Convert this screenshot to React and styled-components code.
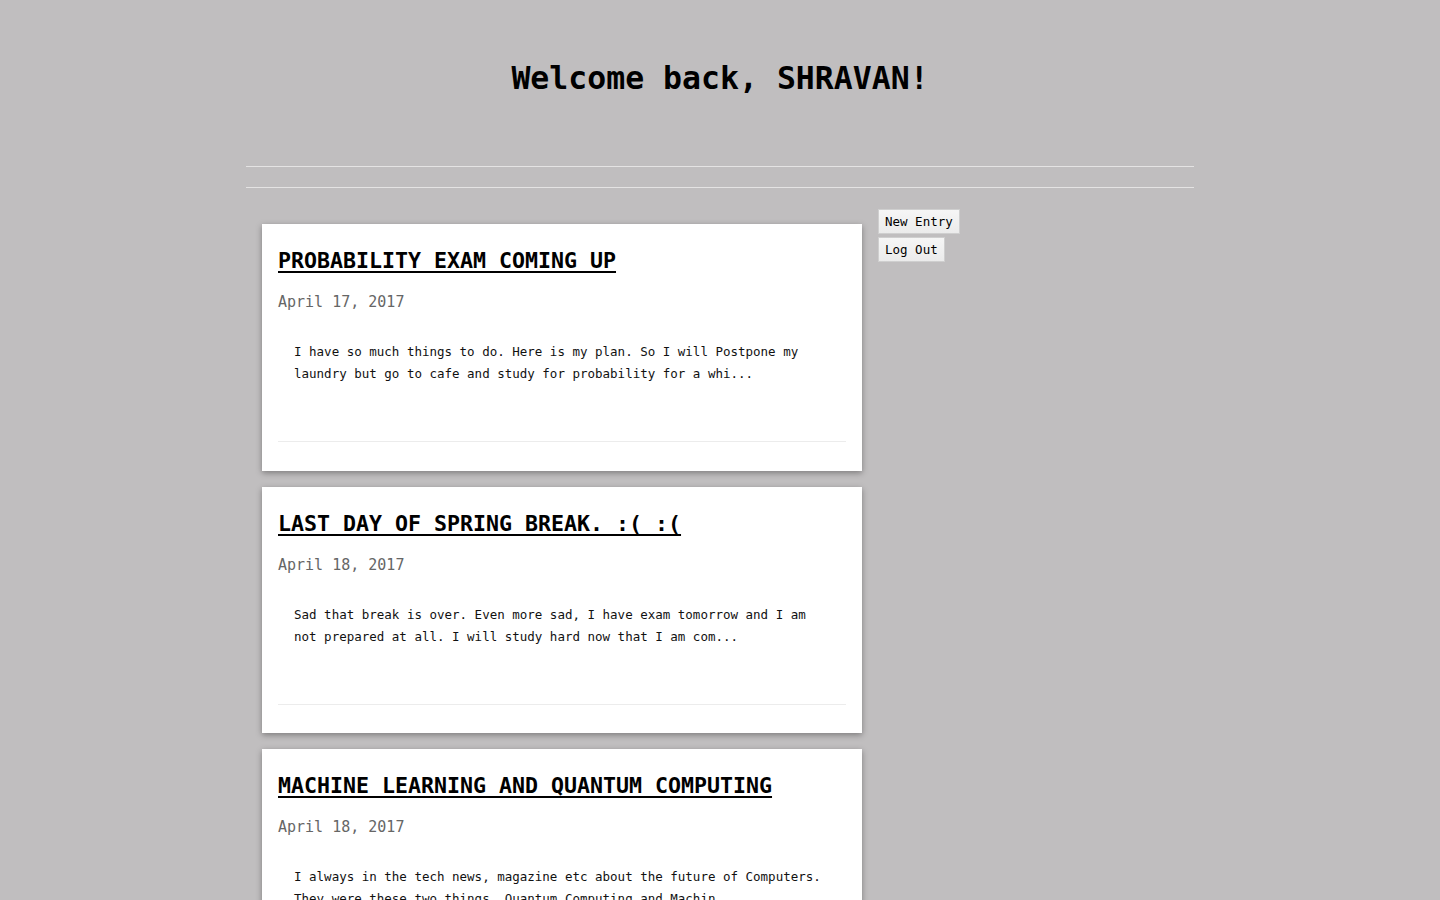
import React from 'react';
import styled, { createGlobalStyle } from 'styled-components';

const GlobalStyle = createGlobalStyle`
  html, body {
    margin: 0;
    padding: 0;
    background: #c0bebf;
  }
  body {
    font-family: 'DejaVu Sans Mono', 'Liberation Mono', monospace;
    color: #000;
  }
`;

const Page = styled.div`
  min-height: 100vh;
  background: #c0bebf;
  overflow: hidden;
`;

const Container = styled.div`
  width: 948px;
  margin: 0 auto;
`;

const Title = styled.h1`
  margin: 0;
  padding-top: 58px;
  height: 108px;
  box-sizing: border-box;
  font-size: 31.5px;
  line-height: 40px;
  font-weight: bold;
  text-align: center;
`;

const Rule = styled.hr`
  margin: 0;
  border: 0;
  border-top: 1px solid #e4e3e3;
  height: 0;
`;

const Spacer = styled.div`
  height: ${(p) => p.size}px;
`;

const Main = styled.div`
  display: flex;
  align-items: flex-start;
  gap: 16px;
  padding: 0 16px;
`;

const Entries = styled.div`
  width: 600px;
  margin-top: 36px;
  display: flex;
  flex-direction: column;
  gap: 16px;
`;

const Card = styled.article`
  background: #fff;
  padding: 16px 16px 28.5px;
  box-shadow: 0 2px 6px rgba(0, 0, 0, 0.35);
`;

const Heading = styled.a`
  display: inline-block;
  margin-top: 6px;
  font-size: 21.6px;
  line-height: 30px;
  font-weight: bold;
  color: #000;
  text-decoration: underline;
  text-decoration-thickness: 2px;
  text-underline-offset: 3px;
  cursor: pointer;
`;

const Date = styled.div`
  margin-top: 16px;
  font-size: 15px;
  line-height: 20px;
  color: #666;
`;

const Excerpt = styled.p`
  margin: 29px 0 0;
  padding: 0 16px;
  min-height: 44px;
  font-size: 12.5px;
  line-height: 22px;
  color: #111;
`;

const CardRule = styled.hr`
  margin: 56px 0 0;
  border: 0;
  border-top: 1px solid #ececec;
  height: 0;
`;

const Actions = styled.div`
  margin-top: 21px;
  display: flex;
  flex-direction: column;
  align-items: flex-start;
  gap: 3px;
`;

const Button = styled.button`
  font-family: 'DejaVu Sans Mono', 'Liberation Mono', monospace;
  font-size: 12.5px;
  line-height: 23px;
  padding: 0 6px;
  color: #000;
  background: linear-gradient(#f6f6f6, #ebebeb);
  border: 1px solid #cfcfcf;
  border-radius: 0;
  cursor: pointer;
`;

const entries = [
  {
    title: 'PROBABILITY EXAM COMING UP',
    date: 'April 17, 2017',
    text: 'I have so much things to do. Here is my plan. So I will Postpone my laundry but go to cafe and study for probability for a whi...',
  },
  {
    title: 'LAST DAY OF SPRING BREAK. :( :(',
    date: 'April 18, 2017',
    text: 'Sad that break is over. Even more sad, I have exam tomorrow and I am not prepared at all. I will study hard now that I am com...',
  },
  {
    title: 'MACHINE LEARNING AND QUANTUM COMPUTING',
    date: 'April 18, 2017',
    text: 'I always in the tech news, magazine etc about the future of Computers. They were these two things, Quantum Computing and Machin...',
  },
];

export default function App() {
  return (
    <Page>
      <GlobalStyle />
      <Container>
        <Title>Welcome back, SHRAVAN!</Title>
        <Spacer size={58} />
        <Rule />
        <Spacer size={20} />
        <Rule />
        <Main>
          <Entries>
            {entries.map((e) => (
              <Card key={e.title}>
                <Heading>{e.title}</Heading>
                <Date>{e.date}</Date>
                <Excerpt>{e.text}</Excerpt>
                <CardRule />
              </Card>
            ))}
          </Entries>
          <Actions>
            <Button>New Entry</Button>
            <Button>Log Out</Button>
          </Actions>
        </Main>
      </Container>
    </Page>
  );
}
